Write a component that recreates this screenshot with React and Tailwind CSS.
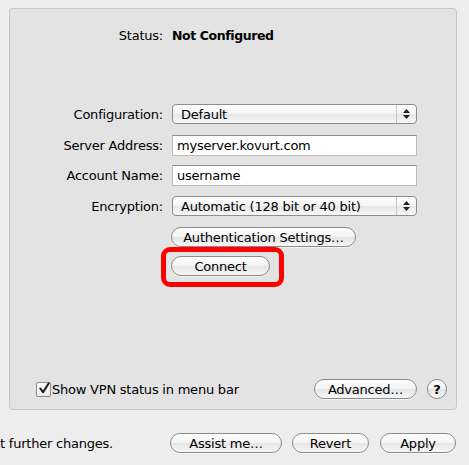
import React from "react";

const font = { fontFamily: '"DejaVu Sans", "Liberation Sans", sans-serif' };

function Btn({ children, className = "" }) {
  return (
    <div
      className={
        "flex items-center justify-center h-[20px] rounded-full border border-[#8a8a8a] bg-[linear-gradient(#fefefe,#f3f3f3_50%,#e4e4e4_50%,#f8f8f8)] text-[13px] tracking-[-0.22px] text-black leading-none shadow-[0_1px_0_rgba(255,255,255,0.6)] " +
        className
      }
    >
      {children}
    </div>
  );
}

function Popup({ children }) {
  return (
    <div className="flex h-[20px] w-[245px] rounded-[4px] border border-[#8e8e8e] bg-[linear-gradient(#fefefe,#f3f3f3_50%,#e6e6e6_50%,#f8f8f8)] text-[13px] tracking-[-0.22px] leading-none">
      <div className="flex flex-1 items-center pl-[8px]">{children}</div>
      <div className="flex w-[20px] flex-col items-center justify-center border-l border-[#c8c8c8] gap-[2px]">
        <svg width="7" height="4" viewBox="0 0 7 4"><path d="M3.5 0 L7 4 L0 4 Z" fill="#222" /></svg>
        <svg width="7" height="4" viewBox="0 0 7 4"><path d="M0 0 L7 0 L3.5 4 Z" fill="#222" /></svg>
      </div>
    </div>
  );
}

function Field({ children }) {
  return (
    <div className="flex h-[21px] w-[245px] items-center border border-[#bdbdbd] border-t-[#8f8f8f] bg-white pl-[4px] text-[13px] tracking-[-0.22px] leading-none">
      {children}
    </div>
  );
}

function Row({ label, children, className = "" }) {
  return (
    <div className={"flex items-center " + className}>
      <div className="w-[154px] text-right text-[13px] tracking-[-0.22px] leading-none pr-[1px]">{label}</div>
      <div className="ml-[8px]">{children}</div>
    </div>
  );
}

export default function App() {
  return (
    <div className="relative h-[465px] w-[469px] overflow-hidden bg-[#ededed] text-black" style={font}>
      <div className="ml-[9px] mt-[8px] flex h-[402px] w-[448px] flex-col rounded-[4px] border border-[#c6c6c6] bg-[#e3e3e3]">
        <Row label="Status:" className="mt-[16px] h-[20px]">
          <span className="text-[12.5px] tracking-[-0.4px] font-bold leading-none">Not Configured</span>
        </Row>
        <Row label="Configuration:" className="mt-[59px]">
          <Popup>Default</Popup>
        </Row>
        <Row label="Server Address:" className="mt-[11px]">
          <Field>myserver.kovurt.com</Field>
        </Row>
        <Row label="Account Name:" className="mt-[9px]">
          <Field>username</Field>
        </Row>
        <Row label="Encryption:" className="mt-[10px]">
          <Popup>Automatic (128 bit or 40 bit)</Popup>
        </Row>
        <div className="ml-[161px] mt-[11px] flex">
          <Btn className="w-[185px]">Authentication Settings…</Btn>
        </div>
        <div className="relative ml-[161px] mt-[9px] flex">
          <Btn className="w-[99px]">Connect</Btn>
          <div className="pointer-events-none absolute left-[-10px] top-[-9px] h-[40px] w-[123px] rounded-[9px] border-[5px] border-[#ff0000]" />
        </div>
        <div className="flex-1" />
        <div className="mb-[10px] flex h-[20px] items-center">
          <div className="ml-[26px] flex h-[15px] w-[15px] items-center justify-center rounded-[2px] border border-[#8a8a8a] bg-[linear-gradient(#ffffff,#ececec)]">
            <svg width="13" height="13" viewBox="0 0 13 13" className="-mt-[2px] ml-[1px]">
              <path d="M2.5 6.5 L5.5 10.5 L11.5 1" fill="none" stroke="#1a1a1a" strokeWidth="2.2" strokeLinecap="round" strokeLinejoin="round" />
            </svg>
          </div>
          <span className="ml-[1px] text-[13px] tracking-[-0.22px] leading-none">Show VPN status in menu bar</span>
          <div className="flex-1" />
          <Btn className="w-[103px]">Advanced…</Btn>
          <div className="ml-[10px] mr-[9px] flex h-[20px] w-[20px] items-center justify-center rounded-full border border-[#8a8a8a] bg-[linear-gradient(#fefefe,#f3f3f3_50%,#e4e4e4_50%,#f8f8f8)] text-[13px] font-bold leading-none">
            ?
          </div>
        </div>
      </div>
      <div className="mt-[23px] flex h-[20px] items-center">
        <span className="text-[13px] tracking-[-0.22px] leading-none">t further changes.</span>
        <div className="flex-1" />
        <Btn className="w-[112px]">Assist me…</Btn>
        <Btn className="ml-[10px] w-[77px]">Revert</Btn>
        <Btn className="ml-[11px] mr-[13px] w-[76px]">Apply</Btn>
      </div>
    </div>
  );
}
